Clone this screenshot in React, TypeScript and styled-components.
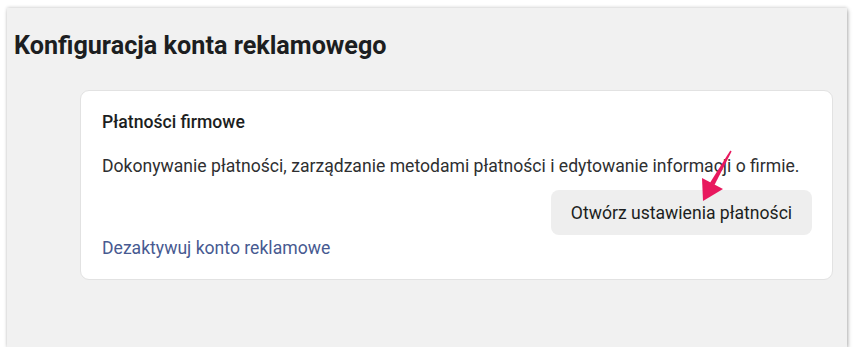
import React from "react";
import styled, { createGlobalStyle } from "styled-components";

const Global = createGlobalStyle`
  html, body { margin: 0; padding: 0; background: #ffffff; }
  body { font-family: Roboto, "Liberation Sans", Arial, sans-serif; }
`;

const Frame = styled.div`
  padding: 8px 8px 0 7px;
`;

const Panel = styled.div`
  position: relative;
  width: 840px;
  height: 339px;
  box-sizing: border-box;
  background: #f1f1f1;
  box-shadow: 1px 2px 4px rgba(0, 0, 0, 0.28), 0 -1px 3px rgba(0, 0, 0, 0.12);
  padding: 23px 0 0 7px;
`;

const Title = styled.h1`
  margin: 0;
  font-size: 25.2px;
  line-height: 30px;
  font-weight: 700;
  color: #1c1e21;
`;

const Card = styled.section`
  margin: 29px 0 0 66px;
  width: 753px;
  height: 190px;
  box-sizing: border-box;
  background: #ffffff;
  border: 1px solid #e2e2e2;
  border-radius: 9px;
  padding: 21px 20px 0 21px;
  display: flex;
  flex-direction: column;
`;

const CardTitle = styled.h2`
  margin: 0;
  font-size: 17.6px;
  line-height: 21px;
  font-weight: 500;
  color: #1c1e21;
`;

const Description = styled.p`
  margin: 23px 0 0;
  font-size: 17.6px;
  line-height: 21px;
  color: #2e2f31;
`;

const Button = styled.button`
  align-self: flex-end;
  margin-top: 13px;
  width: 261px;
  height: 45px;
  border: none;
  border-radius: 8px;
  background: #eeeeee;
  font-family: inherit;
  font-size: 17.6px;
  color: #1c1e21;
  cursor: pointer;
`;

const Link = styled.a`
  align-self: flex-start;
  margin-top: 3px;
  font-size: 17.6px;
  line-height: 21px;
  color: #475a91;
  text-decoration: none;
`;

const Arrow = styled.svg`
  position: absolute;
  left: 683px;
  top: 130px;
  width: 50px;
  height: 70px;
  overflow: visible;
`;

export default function App() {
  return (
    <>
      <Global />
      <Frame>
        <Panel>
          <Title>Konfiguracja konta reklamowego</Title>
          <Card>
            <CardTitle>Płatności firmowe</CardTitle>
            <Description>
              Dokonywanie płatności, zarządzanie metodami płatności i edytowanie informacji o firmie.
            </Description>
            <Button>Otwórz ustawienia płatności</Button>
            <Link href="#">Dezaktywuj konto reklamowe</Link>
          </Card>
          <Arrow viewBox="0 0 50 70">
            <path d="M40.3 12.4 L 41.6 13.4 L 24.5 47 L 20 44.8 Z" fill="#e8185e" />
            <path d="M12 40 L 33 51 L 13 63 Z" fill="#e8185e" />
          </Arrow>
        </Panel>
      </Frame>
    </>
  );
}
